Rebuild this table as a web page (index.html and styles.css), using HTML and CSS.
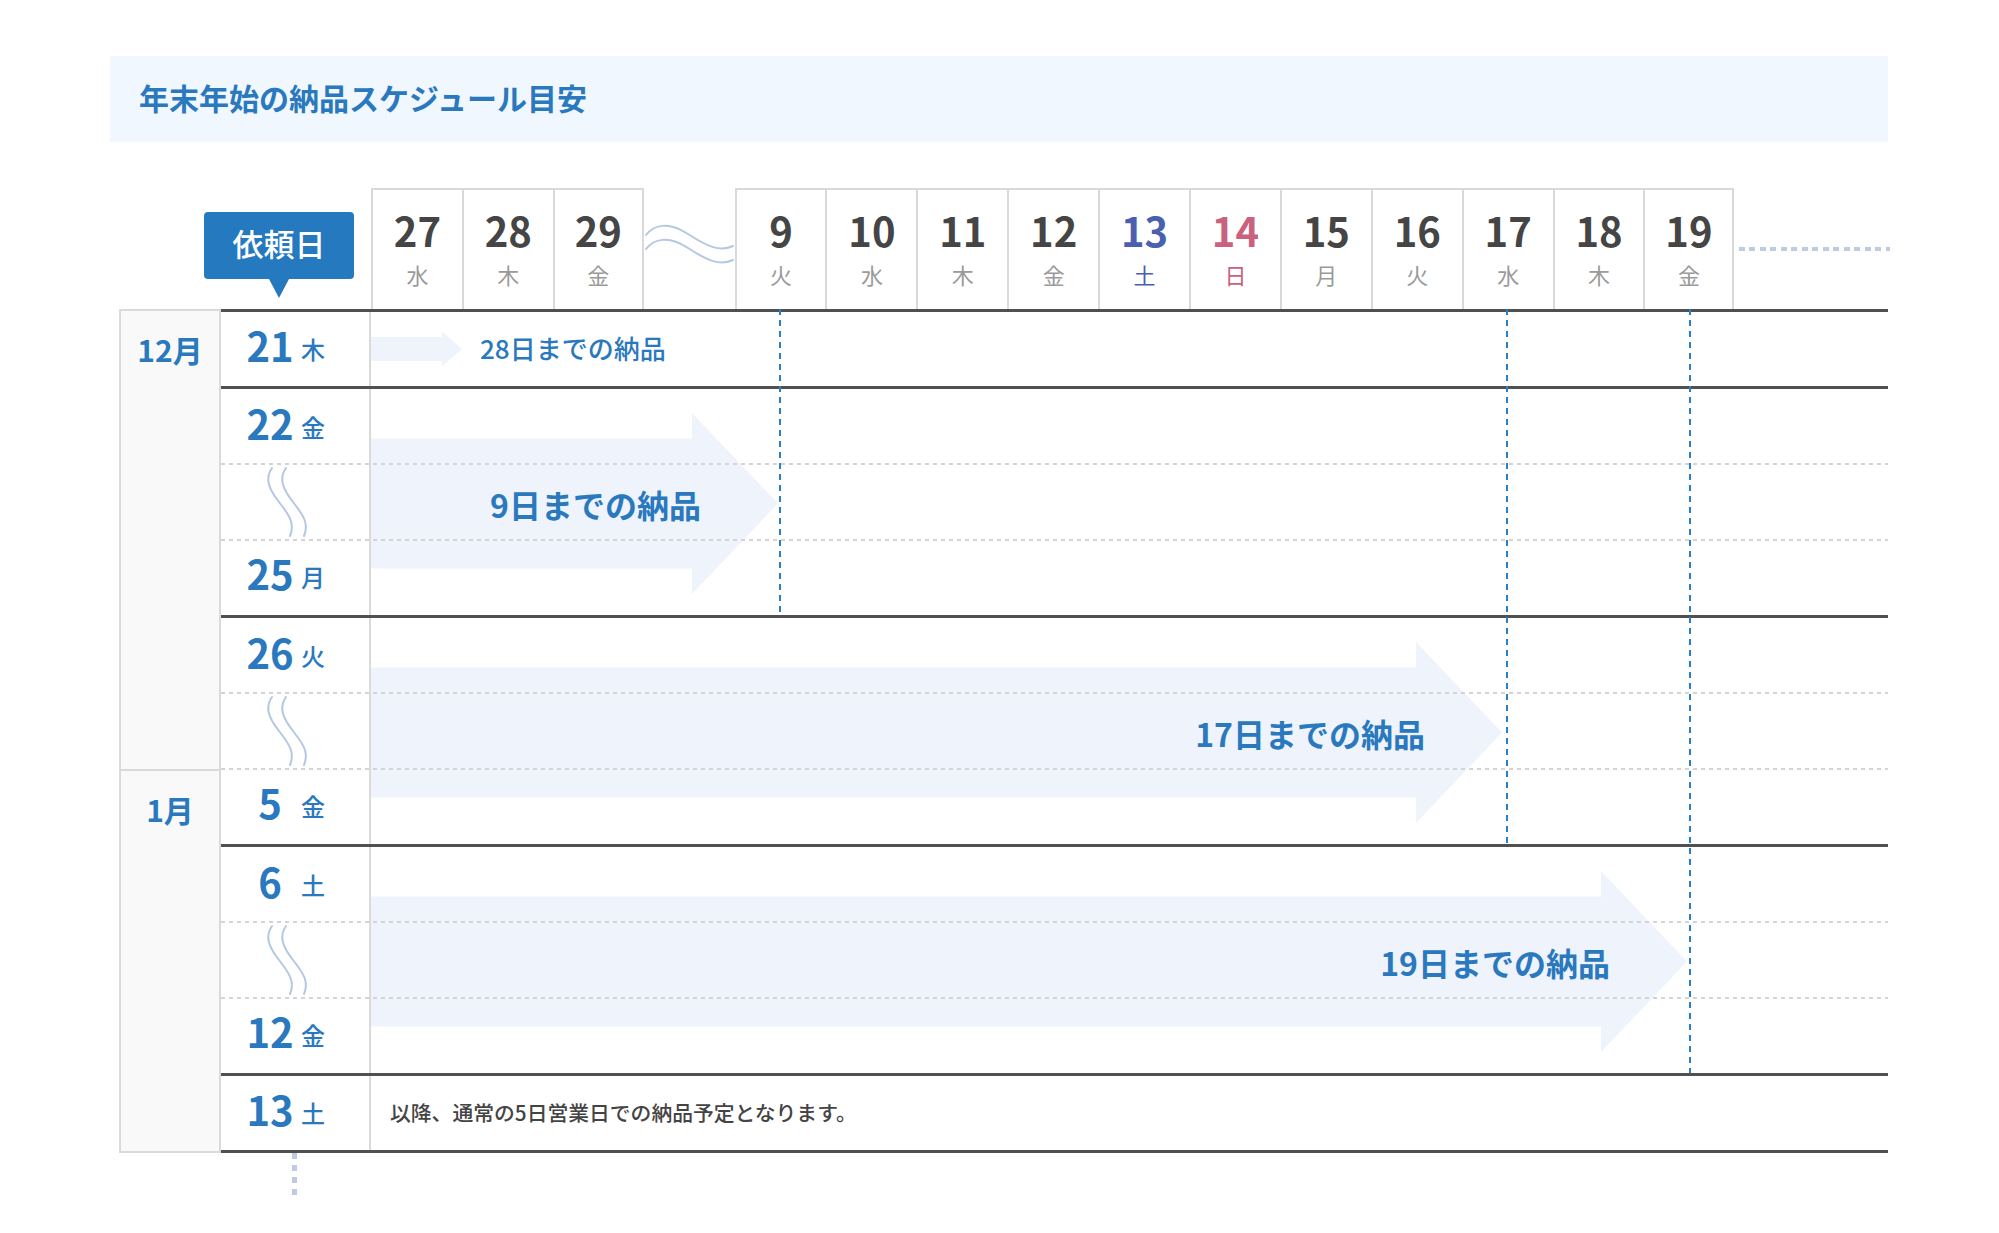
FILE: index.html
```html
<!DOCTYPE html>
<html lang="ja">
<head>
<meta charset="utf-8">
<title>年末年始の納品スケジュール目安</title>
<link rel="stylesheet" href="styles.css">
</head>
<body>
<div class="page">
  <h1 class="title">年末年始の納品スケジュール目安</h1>
  <div class="schedule">
    <div class="head">
      <div class="corner"><div class="badge">依頼日</div></div>
      <div class="days">
        <div class="day"><span class="num">27</span><span class="wd">水</span></div>
        <div class="day"><span class="num">28</span><span class="wd">木</span></div>
        <div class="day end"><span class="num">29</span><span class="wd">金</span></div>
        <div class="skip">
          <svg width="90" height="50" viewBox="0 0 90 50"><path d="M2 17 C10 7, 24 3, 44 16 S76 34, 89 28" /><path d="M2 31 C10 21, 24 17, 44 30 S76 48, 89 42" /></svg>
        </div>
        <div class="day"><span class="num">9</span><span class="wd">火</span></div>
        <div class="day"><span class="num">10</span><span class="wd">水</span></div>
        <div class="day"><span class="num">11</span><span class="wd">木</span></div>
        <div class="day"><span class="num">12</span><span class="wd">金</span></div>
        <div class="day sat"><span class="num">13</span><span class="wd">土</span></div>
        <div class="day sun"><span class="num">14</span><span class="wd">日</span></div>
        <div class="day"><span class="num">15</span><span class="wd">月</span></div>
        <div class="day"><span class="num">16</span><span class="wd">火</span></div>
        <div class="day"><span class="num">17</span><span class="wd">水</span></div>
        <div class="day"><span class="num">18</span><span class="wd">木</span></div>
        <div class="day end"><span class="num">19</span><span class="wd">金</span></div>
        <div class="more"></div>
      </div>
    </div>

    <div class="body">
      <div class="months">
        <div class="month dec">12月</div>
        <div class="month jan">1月</div>
      </div>
      <div class="groups">
        <div class="group g1">
          <div class="row">
            <div class="date"><div class="dt"><span class="dn">21</span><span class="dw">木</span></div></div>
            <div class="lane"><div class="mini"></div><span class="mini-label">28日までの納品</span></div>
          </div>
        </div>

        <div class="group g3">
          <div class="arrow to9">9日までの納品</div>
          <div class="row"><div class="date"><div class="dt"><span class="dn">22</span><span class="dw">金</span></div></div></div>
          <div class="row"><div class="date"><svg class="vwave" width="50" height="72" viewBox="0 0 50 72"><path d="M10 2 C3 12, 6 22, 17 36 C28 50, 33 58, 28 70" /><path d="M24 2 C17 12, 20 22, 31 36 C42 50, 47 58, 42 70" /></svg></div></div>
          <div class="row"><div class="date"><div class="dt"><span class="dn">25</span><span class="dw">月</span></div></div></div>
        </div>

        <div class="group g3">
          <div class="arrow to17">17日までの納品</div>
          <div class="row"><div class="date"><div class="dt"><span class="dn">26</span><span class="dw">火</span></div></div></div>
          <div class="row"><div class="date"><svg class="vwave" width="50" height="72" viewBox="0 0 50 72"><path d="M10 2 C3 12, 6 22, 17 36 C28 50, 33 58, 28 70" /><path d="M24 2 C17 12, 20 22, 31 36 C42 50, 47 58, 42 70" /></svg></div></div>
          <div class="row"><div class="date"><div class="dt"><span class="dn">5</span><span class="dw">金</span></div></div></div>
        </div>

        <div class="group g3">
          <div class="arrow to19">19日までの納品</div>
          <div class="row"><div class="date"><div class="dt"><span class="dn">6</span><span class="dw">土</span></div></div></div>
          <div class="row"><div class="date"><svg class="vwave" width="50" height="72" viewBox="0 0 50 72"><path d="M10 2 C3 12, 6 22, 17 36 C28 50, 33 58, 28 70" /><path d="M24 2 C17 12, 20 22, 31 36 C42 50, 47 58, 42 70" /></svg></div></div>
          <div class="row"><div class="date"><div class="dt"><span class="dn">12</span><span class="dw">金</span></div></div></div>
        </div>

        <div class="group g5">
          <div class="row">
            <div class="date"><div class="dt"><span class="dn">13</span><span class="dw">土</span></div></div>
            <div class="lane"><p class="note">以降、通常の5日営業日での納品予定となります。</p></div>
          </div>
        </div>

        <div class="guide gd9"></div>
        <div class="guide gd17"></div>
        <div class="guide gd19"></div>
      </div>
    </div>
    <div class="cont"></div>
  </div>
</div>
</body>
</html>
```

FILE: styles.css
```css
* { box-sizing: border-box; }

body {
  margin: 0;
  background: #fff;
  color: #444;
  font-family: "Noto Sans CJK JP", "Noto Sans", sans-serif;
}

.page {
  padding: 56px 111px 0 110px;
}

.title {
  margin: 0;
  height: 86px;
  display: flex;
  align-items: center;
  padding: 0 0 4px 29px;
  background: #f0f7fe;
  color: #2a79be;
  font-size: 30px;
  font-weight: 700;
}

.schedule {
  margin: 46px 0 0 9px;
  width: 1769px;
}

/* ---------- header ---------- */
.head {
  display: flex;
  height: 121px;
}

.corner {
  width: 252px;
  flex: none;
  padding: 24px 0 0 85px;
}

.badge {
  position: relative;
  width: 150px;
  height: 67px;
  padding-bottom: 6px;
  background: #2479bf;
  border-radius: 4px;
  color: #fff;
  font-size: 31px;
  font-weight: 500;
  display: flex;
  align-items: center;
  justify-content: center;
}

.badge::after {
  content: "";
  position: absolute;
  left: 50%;
  top: 100%;
  margin-left: -10px;
  border-left: 10px solid transparent;
  border-right: 10px solid transparent;
  border-top: 19px solid #2479bf;
}

.days {
  display: flex;
}

.day {
  width: 90.9px;
  flex: none;
  border-top: 2px solid #d9d9d9;
  border-left: 2px solid #d9d9d9;
  display: flex;
  flex-direction: column;
  align-items: center;
  padding-top: 16px;
}

.day.end {
  border-right: 2px solid #d9d9d9;
}

.num {
  font-size: 40px;
  line-height: 48px;
  font-weight: 700;
  color: #454545;
}

.wd {
  margin-top: 6px;
  font-size: 22px;
  line-height: 28px;
  color: #9a9a9a;
}

.sat .num, .sat .wd { color: #4b5fb1; }
.sun .num, .sun .wd { color: #c9617f; }

.skip {
  width: 90.9px;
  flex: none;
  padding-top: 30px;
}

.skip svg, .vwave {
  display: block;
  fill: none;
  stroke: #b4c8e2;
  stroke-width: 2;
  stroke-linecap: round;
}

.more {
  width: 151px;
  height: 4px;
  margin: 59px 0 0 5px;
  background: repeating-linear-gradient(90deg, #bccde3 0 6px, transparent 6px 10.5px);
}

/* ---------- body ---------- */
.body {
  display: grid;
  grid-template-columns: 102px 1fr;
}

.months {
  border: 2px solid #dadada;
  background: #f9f9f9;
  display: flex;
  flex-direction: column;
}

.month {
  color: #2a79be;
  font-weight: 700;
  font-size: 30px;
  line-height: 42px;
  text-align: center;
  padding-top: 17px;
}

.dec { height: 458px; }

.jan {
  flex: 1;
  border-top: 2px solid #dadada;
}

.groups {
  position: relative;
}

.group {
  position: relative;
  display: flex;
  flex-direction: column;
  border-top: 3px solid #505050;
}

.g1 { height: 77px; }
.g3 { height: 229px; }
.g5 {
  height: 80px;
  border-bottom: 3px solid #505050;
}

.row {
  flex: 1;
  display: flex;
  position: relative;
}

.row + .row::before {
  content: "";
  position: absolute;
  left: 0;
  right: 0;
  top: -1px;
  height: 2px;
  background: repeating-linear-gradient(90deg, #d4d4d4 0 4px, transparent 4px 8px);
}

.date {
  width: 150px;
  flex: none;
  border-right: 2px solid #dadada;
  display: flex;
  align-items: center;
  padding-left: 23px;
}

.dt {
  padding-bottom: 8px;
  white-space: nowrap;
}

.dn {
  display: inline-block;
  width: 52px;
  text-align: center;
  font-size: 40px;
  line-height: 48px;
  font-weight: 700;
  color: #2a79be;
}

.dw {
  margin-left: 5px;
  font-size: 24px;
  font-weight: 500;
  color: #2a79be;
  vertical-align: 3px;
}

.vwave {
  margin-left: 18px;
}

.lane {
  flex: 1;
  display: flex;
  align-items: center;
}

.mini {
  width: 91px;
  height: 35px;
  background: #eef3fc;
  clip-path: polygon(0 5.5px, 71px 5.5px, 71px 0, 100% 50%, 71px 100%, 71px 29.5px, 0 29.5px);
}

.mini-label {
  margin: 0 0 4px 18px;
  font-size: 26px;
  font-weight: 500;
  color: #2a79be;
}

.arrow {
  position: absolute;
  left: 150px;
  top: 50%;
  height: 181px;
  margin-top: -89px;
  background: #eef3fc;
  clip-path: polygon(0 25.5px, calc(100% - 86px) 25.5px, calc(100% - 86px) 0, 100% 50%, calc(100% - 86px) 100%, calc(100% - 86px) 155.5px, 0 155.5px);
  display: flex;
  align-items: center;
  justify-content: flex-end;
  padding-right: 77px;
  font-size: 32px;
  font-weight: 700;
  color: #2a79be;
}

.to9 { width: 407px; }
.to17 { width: 1131px; }
.to19 { width: 1316px; }

.note {
  margin: 0 0 3px;
  padding-left: 19px;
  font-size: 20.8px;
  font-weight: 500;
  color: #444;
}

.guide {
  position: absolute;
  top: 0;
  width: 2px;
  background: repeating-linear-gradient(180deg, #2a7fc6 0 6px, transparent 6px 11px);
}

.gd9 { left: 558px; height: 306px; }
.gd17 { left: 1285px; height: 535px; }
.gd19 { left: 1468px; height: 764px; }

.cont {
  margin-left: 173px;
  width: 5px;
  height: 42px;
  background: repeating-linear-gradient(180deg, #bccde3 0 6px, transparent 6px 12px);
}
```
